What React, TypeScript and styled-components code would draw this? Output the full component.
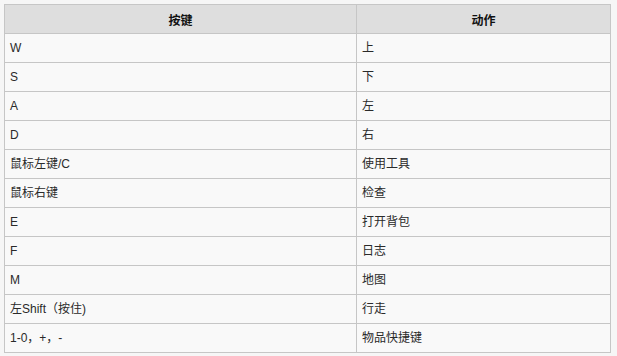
import * as React from 'react';
import styled, { createGlobalStyle } from 'styled-components';

const GlobalStyle = createGlobalStyle`
  html, body {
    margin: 0;
    padding: 0;
    background-color: #f6f6f6;
  }
`;

const Wrapper = styled.div`
  padding: 4px 6px 4px 4px;
  font-family: 'Liberation Sans', 'Noto Sans CJK SC', sans-serif;
  font-size: 12px;
  color: #2a2a2a;
`;

const Table = styled.table`
  width: 607px;
  border-collapse: collapse;
  background-color: #f9f9f9;
  border: 1px solid #c6c6c6;
`;

const HeadCell = styled.th`
  height: 28px;
  padding: 0 5px;
  background-color: #dedede;
  border: 1px solid #c6c6c6;
  font-weight: bold;
  text-align: center;
  color: #111;
`;

const Cell = styled.td<{ $wide?: boolean }>`
  height: 28px;
  padding: 0 5px;
  width: ${(p) => (p.$wide ? '341px' : 'auto')};
  border: 1px solid #c6c6c6;
  line-height: 18px;
  vertical-align: middle;
`;

const keys: [string, string][] = [
  ['W', '上'],
  ['S', '下'],
  ['A', '左'],
  ['D', '右'],
  ['鼠标左键/C', '使用工具'],
  ['鼠标右键', '检查'],
  ['E', '打开背包'],
  ['F', '日志'],
  ['M', '地图'],
  ['左Shift（按住)', '行走'],
  ['1-0，+，-', '物品快捷键'],
];

export default function App() {
  return (
    <>
      <GlobalStyle />
      <Wrapper>
        <Table>
          <thead>
            <tr>
              <HeadCell>按键</HeadCell>
              <HeadCell>动作</HeadCell>
            </tr>
          </thead>
          <tbody>
            {keys.map(([key, action]) => (
              <tr key={key}>
                <Cell $wide>{key}</Cell>
                <Cell>{action}</Cell>
              </tr>
            ))}
          </tbody>
        </Table>
      </Wrapper>
    </>
  );
}
